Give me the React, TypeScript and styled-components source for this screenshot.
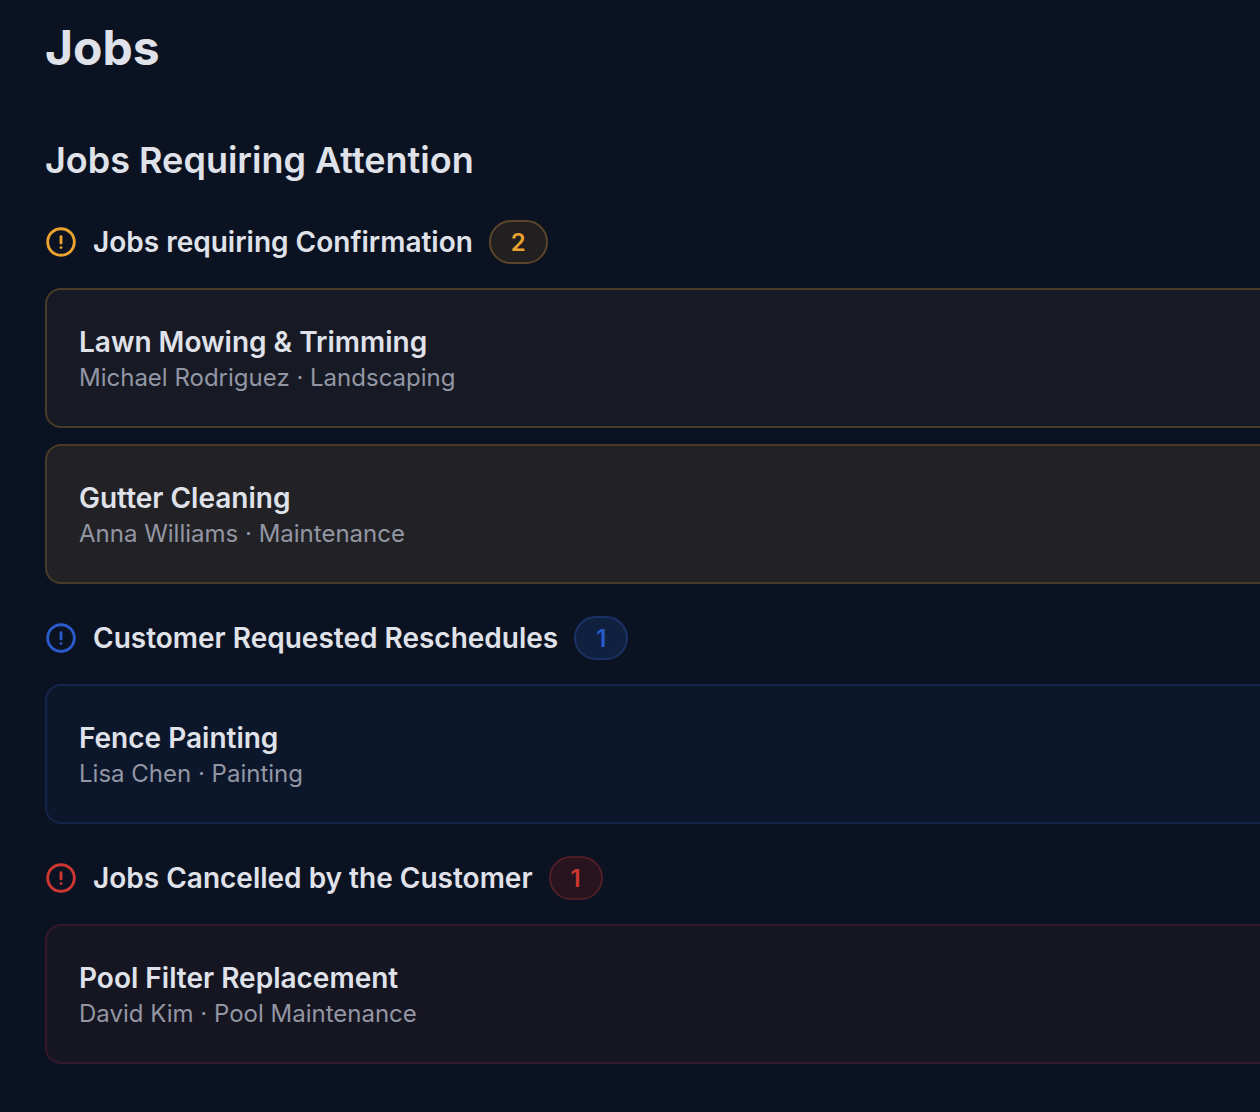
import React from "react";
import styled, { createGlobalStyle } from "styled-components";

const GlobalStyle = createGlobalStyle`
    html, body {
        margin: 0;
        padding: 0;
        background: #0b1222;
        overflow: hidden;
    }
    body {
        font-family: Inter, "Liberation Sans", sans-serif;
        -webkit-font-smoothing: antialiased;
    }
`;

const tones = {
    amber: { icon: "#eaa32f", border: "#483b28", pill: "#221f20", pillBorder: "#5a452a" },
    blue: { icon: "#2a5bcb", border: "#15254a", pill: "#10203f", pillBorder: "#1b3264" },
    red: { icon: "#cc3831", border: "#35192a", pill: "#27141f", pillBorder: "#4f1f28" },
};

type Tone = keyof typeof tones;

const Page = styled.main`
    width: 1320px;
    height: 1112px;
    box-sizing: border-box;
    padding: 18px 0 0 45px;
    display: flex;
    flex-direction: column;
`;

const Title = styled.h1`
    margin: 0;
    font-size: 48px;
    line-height: 60px;
    font-weight: 700;
    color: #e0e2ea;
`;

const SectionTitle = styled.h2`
    margin: 52px 0 0;
    font-size: 36px;
    line-height: 60px;
    font-weight: 600;
    color: #e0e2ea;
`;

const Group = styled.section`
    display: flex;
    flex-direction: column;
    margin-top: 32px;

    &:first-of-type {
        margin-top: 30px;
    }
`;

const GroupHeader = styled.div`
    display: flex;
    align-items: center;
    height: 44px;
    margin-bottom: 24px;
`;

const GroupLabel = styled.span`
    margin-left: 16px;
    font-size: 28px;
    font-weight: 600;
    color: #e0e2ea;
`;

const Count = styled.span<{ $tone: Tone }>`
    margin-left: 16px;
    height: 44px;
    box-sizing: border-box;
    padding: 0 20px;
    display: flex;
    align-items: center;
    border-radius: 22px;
    border: 2px solid ${({ $tone }) => tones[$tone].pillBorder};
    background: ${({ $tone }) => tones[$tone].pill};
    color: ${({ $tone }) => tones[$tone].icon};
    font-size: 24px;
    font-weight: 600;
`;

const CardList = styled.div`
    display: flex;
    flex-direction: column;
    gap: 16px;
`;

const Card = styled.article<{ $bg: string; $tone: Tone }>`
    height: 140px;
    box-sizing: border-box;
    padding: 4px 32px 0;
    display: flex;
    flex-direction: column;
    justify-content: center;
    border-radius: 16px;
    border: 2px solid ${({ $tone }) => tones[$tone].border};
    background: ${({ $bg }) => $bg};
`;

const CardTitle = styled.div`
    font-size: 28px;
    line-height: 36px;
    font-weight: 600;
    color: #e0e2ea;
`;

const CardMeta = styled.div`
    font-size: 24px;
    line-height: 36px;
    color: #9396a3;
`;

const Alert: React.FC<{ tone: Tone }> = ({ tone }) => (
    <svg width="32" height="32" viewBox="0 0 32 32" fill="none" stroke={tones[tone].icon} strokeWidth="2.9" strokeLinecap="round">
        <circle cx="16" cy="16" r="13.3" />
        <path d="M16 10.7v6.3" />
        <path d="M16 21.6h.01" />
    </svg>
);

const groups: { tone: Tone; label: string; jobs: { title: string; meta: string; bg: string }[]; count: number }[] = [
    {
        tone: "amber",
        label: "Jobs requiring Confirmation",
        count: 2,
        jobs: [
            { title: "Lawn Mowing & Trimming", meta: "Michael Rodriguez · Landscaping", bg: "#171a25" },
            { title: "Gutter Cleaning", meta: "Anna Williams · Maintenance", bg: "#222226" },
        ],
    },
    {
        tone: "blue",
        label: "Customer Requested Reschedules",
        count: 1,
        jobs: [{ title: "Fence Painting", meta: "Lisa Chen · Painting", bg: "#0d172c" }],
    },
    {
        tone: "red",
        label: "Jobs Cancelled by the Customer",
        count: 1,
        jobs: [{ title: "Pool Filter Replacement", meta: "David Kim · Pool Maintenance", bg: "#161522" }],
    },
];

function App() {
    return (
        <Page>
            <GlobalStyle />
            <Title>Jobs</Title>
            <SectionTitle>Jobs Requiring Attention</SectionTitle>
            {groups.map((group) => (
                <Group key={group.label}>
                    <GroupHeader>
                        <Alert tone={group.tone} />
                        <GroupLabel>{group.label}</GroupLabel>
                        <Count $tone={group.tone}>{group.count}</Count>
                    </GroupHeader>
                    <CardList>
                        {group.jobs.map((job) => (
                            <Card key={job.title} $bg={job.bg} $tone={group.tone}>
                                <CardTitle>{job.title}</CardTitle>
                                <CardMeta>{job.meta}</CardMeta>
                            </Card>
                        ))}
                    </CardList>
                </Group>
            ))}
        </Page>
    );
}

export default App;
